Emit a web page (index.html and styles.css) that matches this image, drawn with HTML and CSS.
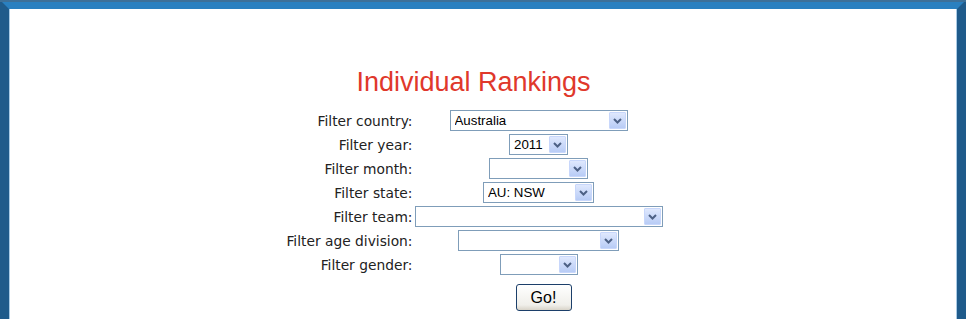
FILE: index.html
```html
<!DOCTYPE html>
<html lang="en">
<head>
  <meta charset="UTF-8">
  <title>Individual Rankings</title>
  <link rel="stylesheet" href="styles.css">
</head>
<body>
  <div class="window">
    <div class="content">
      <h1 class="title">Individual Rankings</h1>

      <form class="filters" onsubmit="return false;">
        <label for="country">Filter country:</label>
        <div class="select w-country">
          <select id="country"><option>Australia</option><option>New Zealand</option></select>
          <span class="arrow"><svg width="15" height="15" viewBox="0 0 15 15"><path d="M4 6 L7.5 9.5 L11 6" fill="none" stroke="#4d6185" stroke-width="2"/></svg></span>
        </div>

        <label for="year">Filter year:</label>
        <div class="select w-year">
          <select id="year"><option>2011</option><option>2010</option></select>
          <span class="arrow"><svg width="15" height="15" viewBox="0 0 15 15"><path d="M4 6 L7.5 9.5 L11 6" fill="none" stroke="#4d6185" stroke-width="2"/></svg></span>
        </div>

        <label for="month">Filter month:</label>
        <div class="select w-month">
          <select id="month"><option></option></select>
          <span class="arrow"><svg width="15" height="15" viewBox="0 0 15 15"><path d="M4 6 L7.5 9.5 L11 6" fill="none" stroke="#4d6185" stroke-width="2"/></svg></span>
        </div>

        <label for="state">Filter state:</label>
        <div class="select w-state">
          <select id="state"><option>AU: NSW</option><option>AU: VIC</option></select>
          <span class="arrow"><svg width="15" height="15" viewBox="0 0 15 15"><path d="M4 6 L7.5 9.5 L11 6" fill="none" stroke="#4d6185" stroke-width="2"/></svg></span>
        </div>

        <label for="team">Filter team:</label>
        <div class="select w-team">
          <select id="team"><option></option></select>
          <span class="arrow"><svg width="15" height="15" viewBox="0 0 15 15"><path d="M4 6 L7.5 9.5 L11 6" fill="none" stroke="#4d6185" stroke-width="2"/></svg></span>
        </div>

        <label for="age">Filter age division:</label>
        <div class="select w-age">
          <select id="age"><option></option></select>
          <span class="arrow"><svg width="15" height="15" viewBox="0 0 15 15"><path d="M4 6 L7.5 9.5 L11 6" fill="none" stroke="#4d6185" stroke-width="2"/></svg></span>
        </div>

        <label for="gender">Filter gender:</label>
        <div class="select w-gender">
          <select id="gender"><option></option></select>
          <span class="arrow"><svg width="15" height="15" viewBox="0 0 15 15"><path d="M4 6 L7.5 9.5 L11 6" fill="none" stroke="#4d6185" stroke-width="2"/></svg></span>
        </div>

        <div class="actions">
          <button class="go">Go!</button>
        </div>
      </form>
    </div>
  </div>
</body>
</html>
```

FILE: styles.css
```css
* {
  margin: 0;
  padding: 0;
  box-sizing: border-box;
}

body {
  background: #fff;
  font-family: 'DejaVu Sans', Verdana, sans-serif;
  color: #222;
}

.window {
  min-height: 100vh;
  border-top: 9px solid #2a80c0;
  border-left: 9px solid #1f5b8b;
  border-right: 9px solid #1f5b8b;
  background: #fff;
  box-shadow: inset 1px 0 0 #a9cbe6, inset -1px 0 0 #a9cbe6;
  position: relative;
}

.window::before {
  content: '';
  position: absolute;
  top: -9px;
  left: -9px;
  right: -9px;
  height: 2px;
  background: #3d7099;
}

.content {
  padding: 58px 20px 0 1px;
  display: flex;
  flex-direction: column;
  align-items: center;
}

.title {
  font-family: 'Liberation Sans', Arial, sans-serif;
  font-weight: normal;
  font-size: 27px;
  line-height: 31px;
  color: #e0382b;
  margin-bottom: 12px;
}

.filters {
  display: grid;
  grid-template-columns: 128px 248px;
  column-gap: 2px;
  row-gap: 3px;
  align-items: center;
}

.filters label {
  font-size: 13.8px;
  text-align: right;
  white-space: nowrap;
}

.select {
  justify-self: center;
  display: flex;
  align-items: center;
  height: 21px;
  padding: 1px;
  border: 1px solid #7f9db9;
  background: #fff;
}

.select select {
  flex: 1;
  min-width: 0;
  height: 100%;
  border: none;
  outline: none;
  background: transparent;
  appearance: none;
  -webkit-appearance: none;
  font-family: 'Liberation Sans', Arial, sans-serif;
  font-size: 13.3px;
  color: #000;
  padding: 0 3px;
}

.arrow {
  width: 17px;
  height: 17px;
  display: flex;
  align-items: center;
  justify-content: center;
  border: 1px solid #c8d7fb;
  border-radius: 1px;
  background: linear-gradient(#dfe8fd, #b8ccf6);
}

.w-country { width: 178px; }
.w-year { width: 59px; }
.w-month { width: 99px; }
.w-state { width: 111px; }
.w-team { width: 248px; }
.w-age { width: 161px; }
.w-gender { width: 78px; }

.actions {
  grid-column: 2;
  padding-top: 6px;
  padding-left: 101px;
}

.go {
  width: 56px;
  height: 27px;
  border: 1px solid #1c3f6a;
  border-radius: 3px;
  background: linear-gradient(#ffffff, #f0efea 80%, #d8d3c8);
  font-family: 'Liberation Sans', Arial, sans-serif;
  font-size: 16px;
  color: #000;
  cursor: pointer;
}
```
